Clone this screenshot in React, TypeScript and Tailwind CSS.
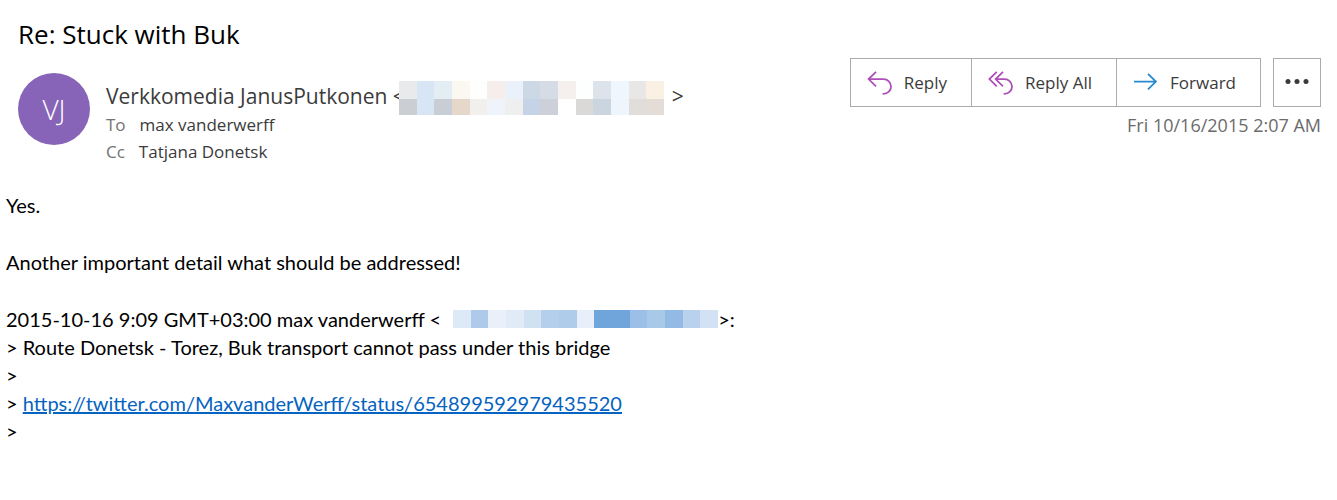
// Reading pane for a single mail: subject, sender block with its response
// buttons, and the plain-text body with the quoted message below it.

import type { ReactNode } from "react";

// Address blocks are pixelated; one class per cell, row by row.
const SENDER_CELLS = [
  "bg-[#e9eaeb]", "bg-[#d7e5f5]", "bg-[#e2eef3]", "bg-[#fbf7f1]", "bg-[#fefefc]",
  "bg-[#f5eeeb]", "bg-[#eaf1fb]", "bg-[#cdd8e5]", "bg-[#d5dce5]", "bg-[#f5efed]",
  "bg-[#fdfefe]", "bg-[#dce3ea]", "bg-[#f0f6fd]", "bg-[#e8e7e6]", "bg-[#faf0e4]",
  "bg-[#cbcfd4]", "bg-[#d7e5f5]", "bg-[#c8cdd6]", "bg-[#e5d7ca]", "bg-[#f1f0ed]",
  "bg-[#eff4fb]", "bg-[#eeefee]", "bg-[#c4d3e6]", "bg-[#cdd0d9]", "bg-[#ffffff]",
  "bg-[#dad9d7]", "bg-[#cad5df]", "bg-[#eff5fc]", "bg-[#e1ddda]", "bg-[#e4dcd6]",
];

const QUOTE_CELLS = [
  "bg-[#dde9f7]", "bg-[#adcaea]", "bg-[#e9f0fa]", "bg-[#e1ebf8]", "bg-[#d0e1f1]",
  "bg-[#b3cfec]", "bg-[#afcceb]", "bg-[#e8effa]", "bg-[#70a5db]", "bg-[#70a5db]",
  "bg-[#9bbfe6]", "bg-[#a9c9e9]", "bg-[#92bae5]", "bg-[#b8d2ee]", "bg-[#d2e2f4]",
];

function Mosaic({ cells, className }: { cells: string[]; className: string }) {
  return (
    <span aria-hidden="true" className={`grid w-[265px] shrink-0 grid-cols-15 ${className}`}>
      {cells.map((c, i) => (
        <span key={i} className={c} />
      ))}
    </span>
  );
}

function ActionButton({ label, children }: { label: string; children: ReactNode }) {
  return (
    <button className="flex items-center gap-3 border-r border-[#ababab] pr-6 pl-4 last:border-r-0">
      {children}
      <span>{label}</span>
    </button>
  );
}

function ReplyIcon() {
  return (
    <svg width="25" height="24" viewBox="0 0 25 24" fill="none" stroke="#ad4fb8" strokeWidth="1.8">
      <path d="M9 .9 1.6 8.1 9 15.3M1.6 8.1h15a7.4 7.4 0 0 1 0 14.8h-.9" />
    </svg>
  );
}

function ReplyAllIcon() {
  return (
    <svg width="25" height="24" viewBox="0 0 25 24" fill="none" stroke="#ad4fb8" strokeWidth="1.8">
      <path d="M8.8.9 1.4 8.1l7.4 7.2M15 .9 7.6 8.1l7.4 7.2M7.6 8.1h9a7.4 7.4 0 0 1 0 14.8h-.9" />
    </svg>
  );
}

function ForwardIcon() {
  return (
    <svg width="25" height="24" viewBox="0 0 25 24" fill="none" stroke="#258bce" strokeWidth="1.8">
      <path d="M1 10.6h22M15 2.8l7.9 7.8-7.9 7.8" />
    </svg>
  );
}

function Recipient({ label, name }: { label: string; name: string }) {
  return (
    <div className="flex gap-3.5">
      <dt className="text-[#737373]">{label}</dt>
      <dd>{name}</dd>
    </div>
  );
}

export default function App() {
  return (
    <main className="min-h-screen bg-white pt-4 pb-12 font-['Open_Sans','Noto_Sans',sans-serif] text-[#3b3b3b]">
      <header className="pr-4 pl-[18px]">
        <h1 className="text-[26px] leading-9 text-black">Re: Stuck with Buk</h1>

        <div className="mt-1.5 flex items-start justify-between gap-6">
          <div className="flex gap-4 pt-[15px]">
            <div className="flex size-[72px] shrink-0 items-center justify-center rounded-full bg-[#8764b8] text-[28px] font-light text-white">
              VJ
            </div>
            <div className="pt-2">
              <div className="flex text-[21px] leading-[30px]">
                <span className="whitespace-nowrap">Verkkomedia JanusPutkonen &lt;</span>
                {/* covers the tail of the opening bracket */}
                <Mosaic cells={SENDER_CELLS} className="-ml-1.5 h-[34px] grid-rows-[18px_16px]" />
                <span className="ml-2">&gt;</span>
              </div>
              <dl className="flex flex-col gap-[7px] text-[17px] leading-5">
                <Recipient label="To" name="max vanderwerff" />
                <Recipient label="Cc" name="Tatjana Donetsk" />
              </dl>
            </div>
          </div>

          <div className="shrink-0">
            <div className="flex h-[49px] gap-3 text-[17px]">
              <div className="flex border border-[#ababab]">
                <ActionButton label="Reply">
                  <ReplyIcon />
                </ActionButton>
                <ActionButton label="Reply All">
                  <ReplyAllIcon />
                </ActionButton>
                <ActionButton label="Forward">
                  <ForwardIcon />
                </ActionButton>
              </div>
              <button aria-label="More actions" className="flex w-12 items-center justify-center border border-[#ababab]">
                <svg width="24" height="10" viewBox="0 0 24 10" fill="#3b3b3b">
                  <circle cx="3" cy="3.5" r="2.5" />
                  <circle cx="12" cy="3.5" r="2.5" />
                  <circle cx="21" cy="3.5" r="2.5" />
                </svg>
              </button>
            </div>
            <p className="mt-2 text-right text-[18px] leading-5 text-[#6b6b6b]">Fri 10/16/2015 2:07 AM</p>
          </div>
        </div>
      </header>

      <article className="mt-[29px] flex flex-col gap-[29px] px-1.5 font-['Lato',sans-serif] text-[20px] leading-7 text-black">
        <p>Yes.</p>
        <p>Another important detail what should be addressed!</p>
        <div>
          <p className="flex items-center">
            <span className="mr-3">2015-10-16 9:09 GMT+03:00 max vanderwerff &lt;</span>
            <Mosaic cells={QUOTE_CELLS} className="h-[18px]" />
            <span>&gt;:</span>
          </p>
          <p>&gt; Route Donetsk - Torez, Buk transport cannot pass under this bridge</p>
          <p>&gt;</p>
          <p>
            &gt;{" "}
            <a
              href="https://twitter.com/MaxvanderWerff/status/654899592979435520"
              className="text-[#0563c1] underline"
            >
              https://twitter.com/MaxvanderWerff/status/654899592979435520
            </a>
          </p>
          <p>&gt;</p>
        </div>
      </article>
    </main>
  );
}
